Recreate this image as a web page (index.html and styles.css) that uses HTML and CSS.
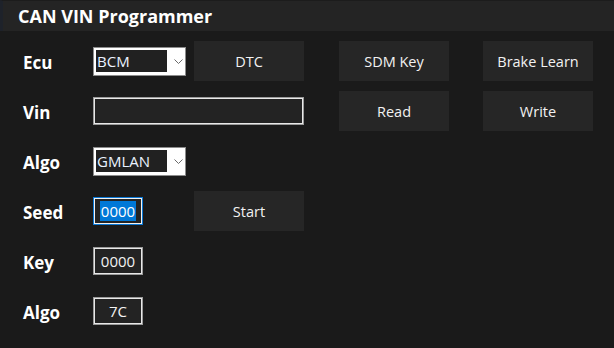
FILE: index.html
```html
<!DOCTYPE html>
<html lang="en">
<head>
  <meta charset="UTF-8">
  <title>CAN VIN Programmer</title>
  <link rel="stylesheet" href="styles.css">
</head>
<body>

  <div class="header">CAN VIN Programmer</div>

  <div class="panel">
    <!-- row 1 -->
    <div class="label">Ecu</div>
    <div class="combo">
      <span class="combo-text">BCM</span>
      <svg class="chevron" width="9" height="5" viewBox="0 0 9 5"><path d="M0.5 0.5 L4.5 4.5 L8.5 0.5" fill="none" stroke="#6a6a6a" stroke-width="1"/></svg>
    </div>
    <div class="btn">DTC</div>
    <div class="btn">SDM Key</div>
    <div class="btn">Brake Learn</div>

    <!-- row 2 -->
    <div class="label">Vin</div>
    <div class="textbox vin"></div>
    <div class="btn">Read</div>
    <div class="btn">Write</div>

    <!-- row 3 -->
    <div class="label">Algo</div>
    <div class="combo">
      <span class="combo-text">GMLAN</span>
      <svg class="chevron" width="9" height="5" viewBox="0 0 9 5"><path d="M0.5 0.5 L4.5 4.5 L8.5 0.5" fill="none" stroke="#6a6a6a" stroke-width="1"/></svg>
    </div>
    <div class="empty span3"></div>

    <!-- row 4 -->
    <div class="label">Seed</div>
    <div class="textbox small focused"><span class="selected">0000</span></div>
    <div class="btn">Start</div>
    <div class="empty span2"></div>

    <!-- row 5 -->
    <div class="label">Key</div>
    <div class="textbox small">0000</div>
    <div class="empty span3"></div>

    <!-- row 6 -->
    <div class="label">Algo</div>
    <div class="textbox small">7C</div>
    <div class="empty span3"></div>
  </div>

</body>
</html>
```

FILE: styles.css
```css
body {
  margin: 0;
  background: #1a1a1a;
  font-family: "Open Sans", "Noto Sans", sans-serif;
  color: #f2f2f2;
  width: 614px;
  height: 348px;
  overflow: hidden;
}

.header {
  height: 30px;
  border-top: 1px solid #1c1c1c;
  border-left: 3px solid #1e222a;
  background: #242424;
  padding-left: 15px;
  font-size: 18px;
  font-weight: 700;
  line-height: 30px;
  color: #ffffff;
}

.panel {
  display: grid;
  grid-template-columns: 70px 101px 145px 144px 110px;
  grid-auto-rows: 50px;
  align-items: center;
  padding: 5px 0 0 23px;
}

.label {
  font-size: 17px;
  font-weight: 700;
  color: #ffffff;
  padding-top: 2px;
}

.combo {
  border: 1px solid #8c8c8c;
  background: #ffffff;
  display: flex;
  align-items: center;
  padding: 2px;
  width: 87px;
  height: 23px;
}

.combo-text {
  flex: none;
  width: 70px;
  height: 22px;
  background: #212121;
  color: #eaf2ff;
  font-size: 15px;
  line-height: 22px;
  padding-left: 1px;
}

.chevron {
  margin-left: 7px;
}

.btn {
  width: 110px;
  height: 40px;
  background: #262626;
  color: #f2f2f2;
  font-size: 14.5px;
  display: flex;
  align-items: center;
  justify-content: center;
}

.textbox {
  height: 28px;
  box-sizing: border-box;
  border: 1px solid #9a9a9a;
  box-shadow: inset 0 0 0 1px #e8e8e8;
  background: #232323;
  font-size: 15px;
  display: flex;
  align-items: center;
  justify-content: center;
  color: #f2f2f2;
}

.vin {
  grid-column: span 2;
  width: 211px;
}

.small {
  width: 50px;
}

.focused {
  border-color: #0a78d6;
  box-shadow: inset 0 0 0 1px #f2f2f2;
}

.selected {
  background: #0078d7;
  color: #ffffff;
  padding: 0 1px;
}

.span2 {
  grid-column: span 2;
}

.span3 {
  grid-column: span 3;
}
```
